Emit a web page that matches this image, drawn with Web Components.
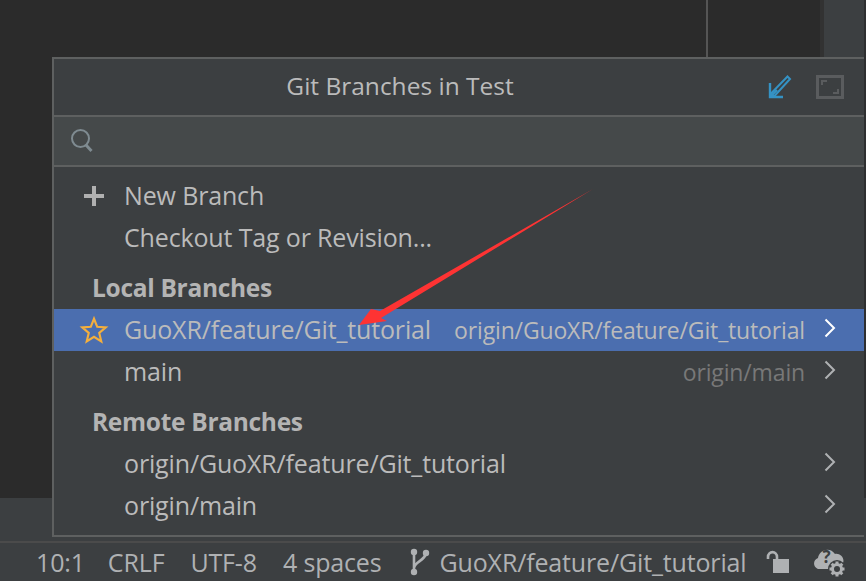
<!DOCTYPE html>
<html>
<head>
<meta charset="utf-8">
<style>
html, body { margin: 0; height: 100%; overflow: hidden; background: #3c3f41; }
body { font-family: "Open Sans", "Noto Sans", sans-serif; color: #bbbbbb; }
</style>
</head>
<body>
<ide-window>
    <branch-popup>
        <popup-action icon="plus">New Branch</popup-action>
        <popup-action>Checkout Tag or Revision...</popup-action>
        <popup-group style="margin-top:9px">Local Branches</popup-group>
        <branch-row star selected remote="origin/GuoXR/feature/Git_tutorial">GuoXR/feature/Git_tutorial</branch-row>
        <branch-row remote="origin/main">main</branch-row>
        <popup-group style="margin-top:9px">Remote Branches</popup-group>
        <branch-row>origin/GuoXR/feature/Git_tutorial</branch-row>
        <branch-row>origin/main</branch-row>
    </branch-popup>
    <status-bar slot="status"></status-bar>
    <arrow-mark></arrow-mark>
</ide-window>

<script>
class IdeWindow extends HTMLElement {
    constructor() {
        super();
        const shadow = this.attachShadow({ mode: 'open' });
        shadow.innerHTML = `
            <style>
            :host { display: flex; flex-direction: column; width: 866px; height: 581px; position: relative; }
            .main { height: 498px; display: flex; }
            .editor { width: 706px; background: #2b2b2b; border-right: 2px solid #555555; }
            .gutter { width: 112px; background: #2b2b2b; border-right: 4px solid #323232; }
            .tool { flex: 1; background: #3c3f41; border-right: 2px solid #2e2f30; }
            .gap { flex: 1; background: #3c3f41; }
            </style>
            <div class="main">
                <div class="editor"></div>
                <div class="gutter"></div>
                <div class="tool"></div>
            </div>
            <div class="gap"></div>
            <slot name="status"></slot>
            <slot></slot>
        `;
    }
}

class BranchPopup extends HTMLElement {
    constructor() {
        super();
        const shadow = this.attachShadow({ mode: 'open' });
        shadow.innerHTML = `
            <style>
            :host { display: block; position: absolute; left: 52px; top: 57px; width: 812px; height: 480px; box-sizing: border-box; background: #3c3f41; border: solid #5e6060; border-width: 2px 0 2px 2px; }
            .title { height: 56px; display: flex; align-items: center; position: relative; border-bottom: 2px solid #5e6060; }
            .title span { width: 692px; text-align: center; font-size: 24.5px; color: #bbbbbb; padding-bottom: 3px; }
            .pin { position: absolute; left: 713px; top: 16px; }
            .expand { position: absolute; left: 762px; top: 16px; }
            .search { height: 48px; background: #45494a; border-bottom: 2px solid #5e6060; display: flex; align-items: center; padding-left: 16px; }
            .list { padding-top: 8px; }
            </style>
            <div class="title">
                <span>Git Branches in Test</span>
                <svg class="pin" width="26" height="24" viewBox="0 0 26 24" fill="none">
                    <path d="M20.5 1.5 L23 4 L7 21.5 L4 18.5 Z" stroke="#3592c4" stroke-width="2"/>
                    <path d="M3 8 V22 H16 M3 22 L10 15" stroke="#3592c4" stroke-width="2.4"/>
                </svg>
                <svg class="expand" width="28" height="24" viewBox="0 0 28 24" fill="none">
                    <rect x="1.5" y="1.5" width="25" height="21" stroke="#5a5c5e" stroke-width="3"/>
                    <path d="M6 10 V6 H11 M22 14 V18 H17" stroke="#5a5c5e" stroke-width="2"/>
                </svg>
            </div>
            <div class="search">
                <svg width="26" height="26" viewBox="0 0 26 26" fill="none">
                    <circle cx="10.5" cy="10.5" r="8.5" stroke="#7f8b91" stroke-width="2"/>
                    <path d="M16 17 L21.5 23" stroke="#7f8b91" stroke-width="3"/>
                </svg>
            </div>
            <div class="list"><slot></slot></div>
        `;
    }
}

// rows share the same metrics: 42px high, label at x=124
const rowStyles = `
    :host { display: flex; align-items: center; height: 42px; font-size: 25px; letter-spacing: -0.15px; color: #bbbbbb; position: relative; }
    .icon { width: 70px; flex: none; display: flex; justify-content: center; padding-left: 10px; box-sizing: border-box; }
    .label { white-space: nowrap; padding-bottom: 2px; }
`;

class PopupAction extends HTMLElement {
    constructor() {
        super();
        const shadow = this.attachShadow({ mode: 'open' });
        const plus = this.getAttribute('icon') === 'plus'
            ? `<svg width="20" height="20" viewBox="0 0 20 20"><path d="M8 0h4v8h8v4h-8v8h-4v-8h-8v-4h8z" fill="#b0b0b0"/></svg>`
            : '';
        shadow.innerHTML = `<style>${rowStyles}</style><div class="icon">${plus}</div><span class="label"><slot></slot></span>`;
    }
}

class PopupGroup extends HTMLElement {
    constructor() {
        super();
        const shadow = this.attachShadow({ mode: 'open' });
        shadow.innerHTML = `
            <style>
            :host { display: flex; align-items: center; box-sizing: border-box; height: 41px; padding: 0 0 2px 38px; font-size: 24.5px; font-weight: 700; color: #b4b4b4; letter-spacing: -0.3px; }
            </style>
            <slot></slot>
        `;
    }
}

class BranchRow extends HTMLElement {
    constructor() {
        super();
        const shadow = this.attachShadow({ mode: 'open' });
        const star = this.hasAttribute('star')
            ? `<svg width="30" height="30" viewBox="0 0 28 28" fill="none"><path d="M14 3.5 L17 11 L25 11.6 L18.9 16.8 L20.8 24.6 L14 20.4 L7.2 24.6 L9.1 16.8 L3 11.6 L11 11 Z" stroke="#f4af3d" stroke-width="2"/></svg>`
            : '';
        const selected = this.hasAttribute('selected');
        const remote = this.getAttribute('remote') || '';
        shadow.innerHTML = `
            <style>
            ${rowStyles}
            :host { ${selected ? 'background: #4b6eaf;' : ''} }
            .remote { margin-left: auto; white-space: nowrap; font-size: 23px; color: ${selected ? '#bbbbbb' : '#787878'}; }
            .arrow { width: 59px; flex: none; display: flex; justify-content: flex-end; padding-right: 28px; box-sizing: border-box; margin-top: -4px; }
            </style>
            <div class="icon">${star}</div>
            <span class="label"><slot></slot></span>
            <span class="remote">${remote}</span>
            <div class="arrow">
                <svg width="12" height="20" viewBox="0 0 12 20" fill="none"><path d="M1.5 1.5 L10 10 L1.5 18.5" stroke="${selected ? '#ffffff' : '#afb1b3'}" stroke-width="2"/></svg>
            </div>
        `;
    }
}

class StatusBar extends HTMLElement {
    constructor() {
        super();
        const shadow = this.attachShadow({ mode: 'open' });
        shadow.innerHTML = `
            <style>
            :host { display: flex; align-items: center; box-sizing: border-box; height: 40px; flex: none; border-top: 2px solid #4b4b4b; padding-left: 36px; font-size: 25px; letter-spacing: -0.15px; color: #afb1b3; white-space: nowrap; background: #3c3f41; }
            span { margin-right: 26px; }
            svg { flex: none; }
            </style>
            <span style="margin-right:23px">10:1</span><span>CRLF</span><span>UTF-8</span><span style="margin-right:28px">4 spaces</span>
            <svg width="20" height="28" viewBox="0 0 20 28" style="margin-right:10px" fill="none">
                <circle cx="4" cy="4" r="3.2" fill="#afb1b3"/><circle cx="4" cy="24" r="3.2" fill="#afb1b3"/><circle cx="16" cy="5" r="3.2" fill="#afb1b3"/>
                <path d="M4 4 V24 M4 20 C5 13 15 13 16 5" stroke="#afb1b3" stroke-width="2.6"/>
            </svg>
            <span style="margin-right:20px">GuoXR/feature/Git_tutorial</span>
            <svg width="24" height="24" viewBox="0 0 24 24" style="margin-right:23px" fill="none">
                <path d="M2 9 V7 C2 0.5 11 0.5 11 7 V9" stroke="#afb1b3" stroke-width="2.6"/>
                <rect x="7" y="9" width="16" height="14" fill="#afb1b3"/>
            </svg>
            <svg width="34" height="32" viewBox="0 0 34 32">
                <path d="M7 23 C0 23 -1 14 5 12 C6 4 17 0 22 8 C27 7 32 12 30 17 L20 23 Z" fill="#afb1b3"/>
                <text x="9.5" y="17" font-size="17" font-weight="700" font-family="Open Sans" fill="#3c3f41">?</text>
                <circle cx="24" cy="23" r="9" fill="#3c3f41"/>
                <circle cx="24" cy="23" r="4.5" fill="none" stroke="#afb1b3" stroke-width="3"/>
                <path d="M24 15.5 V18 M24 28 V30.5 M16.5 23 H19 M29 23 H31.5 M18.7 17.7 L20.5 19.5 M27.5 26.5 L29.3 28.3 M18.7 28.3 L20.5 26.5 M27.5 19.5 L29.3 17.7" stroke="#afb1b3" stroke-width="3"/>
            </svg>
        `;
    }
}

// red annotation arrow drawn on top of the screenshot
class ArrowMark extends HTMLElement {
    constructor() {
        super();
        const shadow = this.attachShadow({ mode: 'open' });
        shadow.innerHTML = `
            <style>:host { position: absolute; left: 0; top: 0; pointer-events: none; }</style>
            <svg width="866" height="581" style="display:block">
                <path d="M593 189 L380 311 L371 309 L359 325 L387 321 L381 318 Z" fill="#fe3333"/>
            </svg>
        `;
    }
}

window.customElements.define('ide-window', IdeWindow);
window.customElements.define('branch-popup', BranchPopup);
window.customElements.define('popup-action', PopupAction);
window.customElements.define('popup-group', PopupGroup);
window.customElements.define('branch-row', BranchRow);
window.customElements.define('status-bar', StatusBar);
window.customElements.define('arrow-mark', ArrowMark);
</script>
</body>
</html>
